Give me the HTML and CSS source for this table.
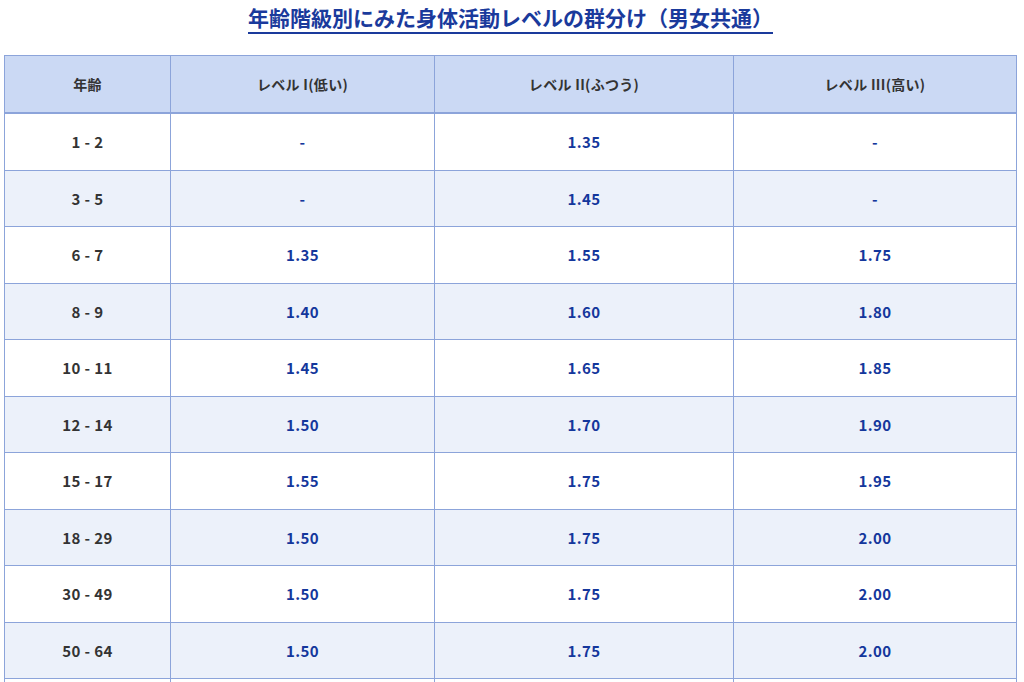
FILE: index.html
```html
<!DOCTYPE html>
<html lang="ja">
<head>
<meta charset="utf-8">
<link rel="stylesheet" href="styles.css">
</head>
<body>
<div class="page">
  <div class="title-wrap"><h1 class="title">年齢階級別にみた身体活動レベルの群分け（男女共通）</h1></div>
  <table class="pal">
    <colgroup>
      <col class="c1"><col class="c2"><col class="c3"><col class="c4">
    </colgroup>
    <thead>
      <tr><th>年齢</th><th>レベル I(低い)</th><th>レベル II(ふつう)</th><th>レベル III(高い)</th></tr>
    </thead>
    <tbody>
      <tr><td class="age">1 - 2</td><td>-</td><td>1.35</td><td>-</td></tr>
      <tr><td class="age">3 - 5</td><td>-</td><td>1.45</td><td>-</td></tr>
      <tr><td class="age">6 - 7</td><td>1.35</td><td>1.55</td><td>1.75</td></tr>
      <tr><td class="age">8 - 9</td><td>1.40</td><td>1.60</td><td>1.80</td></tr>
      <tr><td class="age">10 - 11</td><td>1.45</td><td>1.65</td><td>1.85</td></tr>
      <tr><td class="age">12 - 14</td><td>1.50</td><td>1.70</td><td>1.90</td></tr>
      <tr><td class="age">15 - 17</td><td>1.55</td><td>1.75</td><td>1.95</td></tr>
      <tr><td class="age">18 - 29</td><td>1.50</td><td>1.75</td><td>2.00</td></tr>
      <tr><td class="age">30 - 49</td><td>1.50</td><td>1.75</td><td>2.00</td></tr>
      <tr><td class="age">50 - 64</td><td>1.50</td><td>1.75</td><td>2.00</td></tr>
      <tr><td class="age">65 - 74</td><td>1.45</td><td>1.70</td><td>1.95</td></tr>
      <tr><td class="age">75以上</td><td>1.40</td><td>1.65</td><td>-</td></tr>
    </tbody>
  </table>
</div>
</body>
</html>
```
FILE: styles.css
```css
html, body {
  margin: 0;
  padding: 0;
  background: #ffffff;
}
body {
  font-family: "Noto Sans CJK JP", "Noto Sans", sans-serif;
  color: #333333;
}
.page {
  margin: 0 7px 0 4px;
}
.title-wrap {
  display: flex;
  justify-content: center;
  padding-top: 3px;
  margin-bottom: 21px;
}
.title {
  margin: 0;
  font-size: 21px;
  line-height: 28px;
  font-weight: 700;
  color: #1a3a9c;
  border-bottom: 2px solid #1a3a9c;
  padding-bottom: 1px;
}
.pal {
  width: 100%;
  border-collapse: collapse;
  table-layout: fixed;
  font-size: 14px;
  font-weight: 700;
}
.c1 { width: 166px; }
.c2 { width: 264px; }
.c3 { width: 299px; }
.c4 { width: auto; }
.pal th, .pal td {
  border: 1px solid #8ca4da;
  text-align: center;
  vertical-align: middle;
  padding: 0 8px;
}
.pal th {
  background: #cbd9f4;
  color: #333333;
  height: 56px;
  border-bottom: 2px solid #8ca4da;
  font-weight: 700;
  letter-spacing: 0.3px;
}
.pal td {
  height: 55.5px;
  color: #14379c;
  font-size: 15px;
  letter-spacing: 0.4px;
}
.pal td.age {
  color: #333333;
}
.pal tbody tr:nth-child(even) td {
  background: #ecf1fa;
}
```
